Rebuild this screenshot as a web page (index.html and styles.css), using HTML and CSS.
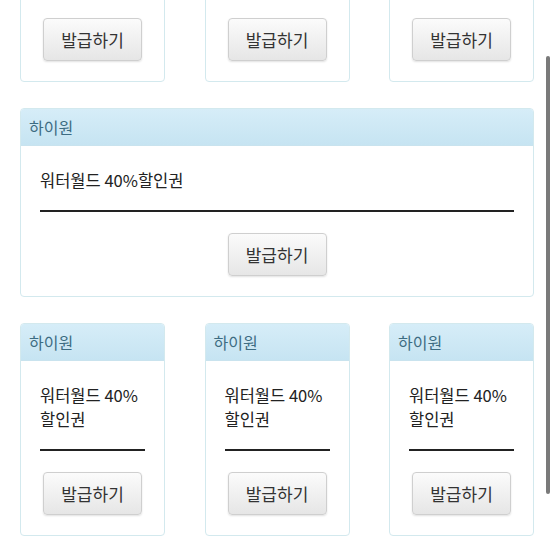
FILE: index.html
```html
<!DOCTYPE html>
<html>
	<head>
		<meta charset="UTF-8">
		<title>쿠폰 발급</title>
		<link rel="stylesheet" href="styles.css">
	</head>
	<body>
		<div class="page">
			<div class="row">
				<div class="card">
					<div class="card-head">하이원</div>
					<div class="card-body">
						<p class="title">워터월드 40%<br>할인권</p>
						<div class="btn-wrap"><button type="button" class="btn">발급하기</button></div>
					</div>
				</div>
				<div class="card">
					<div class="card-head">하이원</div>
					<div class="card-body">
						<p class="title">워터월드 40%<br>할인권</p>
						<div class="btn-wrap"><button type="button" class="btn">발급하기</button></div>
					</div>
				</div>
				<div class="card">
					<div class="card-head">하이원</div>
					<div class="card-body">
						<p class="title">워터월드 40%<br>할인권</p>
						<div class="btn-wrap"><button type="button" class="btn">발급하기</button></div>
					</div>
				</div>
			</div>

			<div class="card wide">
				<div class="card-head">하이원</div>
				<div class="card-body">
					<p class="title">워터월드 40%할인권</p>
					<div class="btn-wrap"><button type="button" class="btn">발급하기</button></div>
				</div>
			</div>

			<div class="row">
				<div class="card">
					<div class="card-head">하이원</div>
					<div class="card-body">
						<p class="title">워터월드 40%<br>할인권</p>
						<div class="btn-wrap"><button type="button" class="btn">발급하기</button></div>
					</div>
				</div>
				<div class="card">
					<div class="card-head">하이원</div>
					<div class="card-body">
						<p class="title">워터월드 40%<br>할인권</p>
						<div class="btn-wrap"><button type="button" class="btn">발급하기</button></div>
					</div>
				</div>
				<div class="card">
					<div class="card-head">하이원</div>
					<div class="card-body">
						<p class="title">워터월드 40%<br>할인권</p>
						<div class="btn-wrap"><button type="button" class="btn">발급하기</button></div>
					</div>
				</div>
			</div>
		</div>
		<div class="scrollbar"></div>
	</body>
</html>
```

FILE: styles.css
```css
*{
	margin: 0;
	padding: 0;
	box-sizing: border-box;
}
html, body{
	width: 554px;
	height: 554px;
	overflow: hidden;
	background-color: #fff;
	font-family: "Noto Sans CJK KR", "Noto Sans", sans-serif;
	color: #222;
}
.page{
	display: flex;
	flex-direction: column;
	gap: 26px;
	padding: 0 20px;
	margin-top: -131px;
}
.row{
	display: flex;
	justify-content: space-between;
}
.card{
	width: 145px;
	border: 1px solid #d3e9ee;
	border-radius: 4px;
	background-color: #fff;
	overflow: hidden;
}
.wide{
	width: 514px;
}
.card-head{
	height: 37px;
	line-height: 36px;
	padding-left: 8px;
	font-size: 16px;
	color: #3d6c82;
	background: linear-gradient(#d6edf8, #c6e4f2);
	border-bottom: 1px solid #c9e3ee;
}
.card-body{
	padding: 22px 19px 20px;
}
.title{
	font-size: 16.5px;
	line-height: 24px;
	padding-bottom: 18px;
	border-bottom: 2px solid #222;
}
.btn-wrap{
	display: flex;
	justify-content: center;
	padding-top: 21px;
}
.btn{
	width: 99px;
	height: 43px;
	font-family: "Noto Sans CJK KR", sans-serif;
	font-size: 17px;
	color: #333;
	background: linear-gradient(#fbfbfb, #e6e6e6);
	border: 1px solid #cfcfcf;
	border-radius: 4px;
	box-shadow: 0 1px 2px rgba(0,0,0,0.12);
}

.scrollbar{
	position: absolute;
	top: 56px;
	left: 546px;
	width: 4px;
	height: 438px;
	background-color: #7a7a7a;
	border-radius: 2px;
}
```
